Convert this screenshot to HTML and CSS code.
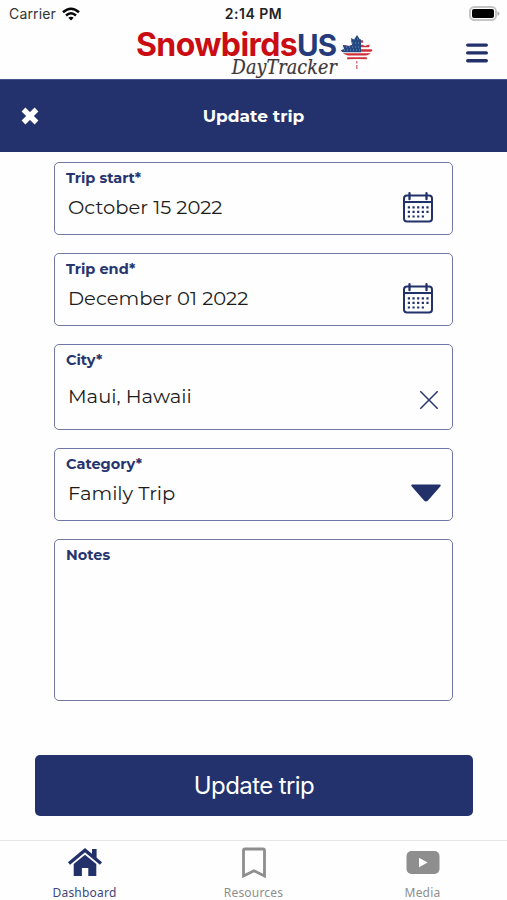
FILE: index.html
```html
<!DOCTYPE html>
<html lang="en">
<head>
<meta charset="utf-8">
<title>Update trip</title>
<link rel="stylesheet" href="styles.css">
</head>
<body>
<div class="app">
  <header class="top">
    <div class="status">
      <div class="carrier"><span>Carrier</span>
        <svg width="18" height="14" viewBox="0 0 18 14" fill="none" stroke="#050505" stroke-width="2.5"><path d="M1 5.3Q9-1.9 17 5.3M4 8.5Q9 4.1 14 8.5"/><path d="M9 13.5 6.3 10.8Q9 8.6 11.7 10.8Z" fill="#050505" stroke="none"/></svg>
      </div>
      <time class="clock">2:14 PM</time>
      <svg class="battery" width="31" height="15" viewBox="0 0 31 15"><rect x="1" y="1" width="26" height="13" rx="4.3" fill="#fff" stroke="#c4c4c4" stroke-width="2"/><rect x="3" y="3" width="22" height="9" rx="2" fill="#000"/><path d="M28.5 5.2v4.6q2-.7 2-2.3t-2-2.3" fill="#aaa"/></svg>
    </div>
    <div class="brandbar">
      <div class="brand">
        <div class="wordmark">
          <div class="name">Snowbirds<span>US</span></div>
          <div class="sub">DayTracker</div>
        </div>
        <svg class="leaf" width="32" height="36" viewBox="0 0 32 36">
          <defs><clipPath id="leaf"><path d="M16 0 19 4.5 22 3 22 10 24 11 29 9 28 12.5 31.5 15 29 19 25.5 20.5 26 24.5 17 24 15 24 6 24.5 6.5 20.5 3 19 0 15.5 3 14 2 10 8 11 11 10 10 3 13 4.5Z"/></clipPath></defs>
          <g clip-path="url(#leaf)"><path fill="#fff" d="M0 0h32v28H0z"/><path d="M0 6.5h32M0 11h32M0 15.5h32M0 19.4h32M0 23.4h32" stroke="#cf2f38" stroke-width="2.3"/><path d="M0 0h20v17.3H0z" fill="#254983"/><path d="M5 12h15M3 15h17M11 8h9M13 4h7" stroke="#9bb0cf" stroke-width=".7" stroke-dasharray="1 2"/></g>
          <path d="M15.8 26v2.5M15.8 30v4" stroke="#d77a80" stroke-width="1.5"/>
        </svg>
      </div>
      <svg class="menu" width="22" height="20" viewBox="0 0 22 20" stroke="#23316b" stroke-width="3.4" stroke-linecap="round"><path d="M1.7 2.1h18.6M1.7 9.9h18.6M1.7 17.7h18.6"/></svg>
    </div>
  </header>
  <div class="titlebar">
    <svg class="close" width="18" height="18" viewBox="0 0 18 18" stroke="#fff" stroke-width="5.4"><path d="m2.5 2.5 13 13M15.5 2.5l-13 13"/></svg>
    <h1>Update trip</h1>
  </div>
  <main class="form">
    <section class="field">
      <label>Trip start*</label><div class="value">October 15 2022</div>
      <svg class="cal" width="30" height="31" viewBox="0 0 30 31" fill="none" stroke="#23316b" stroke-width="2"><rect x="1" y="3.5" width="28" height="26" rx="3"/><path d="M1 10h28"/><path d="M6.5 1.2v6M23.5 1.2v6" stroke-width="2.3" stroke-linecap="round"/><path d="M4.8 15.3h21M4.8 19.8h21M4.8 24.5h16.5" stroke-width="2.2" stroke-dasharray="2.2 2.45"/></svg>
    </section>
    <section class="field">
      <label>Trip end*</label><div class="value">December 01 2022</div>
      <svg class="cal" width="30" height="31" viewBox="0 0 30 31" fill="none" stroke="#23316b" stroke-width="2"><rect x="1" y="3.5" width="28" height="26" rx="3"/><path d="M1 10h28"/><path d="M6.5 1.2v6M23.5 1.2v6" stroke-width="2.3" stroke-linecap="round"/><path d="M4.8 15.3h21M4.8 19.8h21M4.8 24.5h16.5" stroke-width="2.2" stroke-dasharray="2.2 2.45"/></svg>
    </section>
    <section class="field city">
      <label>City*</label><div class="value">Maui, Hawaii</div>
      <svg class="clear" width="20" height="20" viewBox="0 0 20 20" stroke="#29376f" stroke-width="1.5"><path d="m1.3 1.3 17.4 17.4M18.7 1.3 1.3 18.7"/></svg>
    </section>
    <section class="field category">
      <label>Category*</label><div class="value">Family Trip</div>
      <svg class="caret" width="30" height="18" viewBox="0 0 30 18"><path d="M1.3 1.5h27.4L16 16q-1 1-2 0Z" fill="#23316b" stroke="#23316b" stroke-width="2" stroke-linejoin="round"/></svg>
    </section>
    <section class="field notes"><label>Notes</label></section>
  </main>
  <button class="submit" type="button">Update trip</button>
  <nav class="tabs">
    <a class="tab active"><svg width="36" height="30" viewBox="0 0 36 30"><path d="M2 15.5 18 2.2l16 13.3" fill="none" stroke="#23316b" stroke-width="3.3"/><path d="M25 1h4.6v12L25 9ZM6.7 16 18 6.8 29.3 16v12h-8v-8h-6.4v8H6.7Z" fill="#23316b"/></svg><span>Dashboard</span></a>
    <a class="tab"><svg width="26" height="32" viewBox="0 0 26 32"><path d="M2.5 29V3.5Q2.5 2 4 2h18q1.5 0 1.5 1.5V29L13 23.8Z" fill="none" stroke="#8e8e8e" stroke-width="2.8"/></svg><span>Resources</span></a>
    <a class="tab"><svg width="34" height="26" viewBox="0 0 34 26"><rect x=".5" y="1" width="33" height="23" rx="5" fill="#8e8e8e"/><path d="M13 7.8v9.4l8.6-4.7Z" fill="#fff"/></svg><span>Media</span></a>
  </nav>
</div>
</body>
</html>
```

FILE: styles.css
```css
* { box-sizing: border-box; }
body { margin: 0; background: #fefefe; font-family: Montserrat, Inter, sans-serif; color: #1c1c1c; }
svg { display: block; flex: none; }
.app { width: 507px; height: 900px; display: flex; flex-direction: column; overflow: hidden; }
.top { height: 79px; flex: none; }
.status { height: 27px; display: grid; grid-template-columns: 1fr auto 1fr; align-items: center; padding: 0 7px 0 9px; }
.carrier { display: flex; gap: 6px; align-items: center; font: 14px/20px Inter, sans-serif; letter-spacing: .15px; color: #333; }
.clock { font: 600 14px/20px Inter, sans-serif; letter-spacing: .5px; margin: 0 1px 0 -1px; color: #222; }
.battery { justify-self: end; }
.brandbar { height: 52px; display: flex; justify-content: space-between; padding: 0 19px 0 136px; }
.brand { display: flex; gap: 5px; }
.wordmark { width: 201px; display: flex; flex-direction: column; }
.name { height: 31px; font: 700 32px/35px Inter, sans-serif; letter-spacing: -.6px; color: #c90d12; white-space: nowrap; }
.name span { font-size: 29.5px; letter-spacing: -.8px; color: #253b7a; }
.sub { align-self: flex-end; font: italic 19.5px/20px "DejaVu Serif Condensed", "DejaVu Serif", serif; letter-spacing: .1px; color: #3e3739; -webkit-text-stroke: .2px #3e3739; }
.leaf { margin: 8px 0 0 -1px; }
.menu { margin-top: 16px; }
.titlebar { height: 73px; flex: none; display: grid; grid-template-columns: 40px 1fr 40px; align-items: center; background: #23326c; border-top: 1px solid #47538a; padding: 0 21px 0 21px; }
h1 { margin: 0; text-align: center; font-size: 17px; line-height: 24px; font-weight: 700; color: #fff; letter-spacing: 0; }
.form { display: flex; flex-direction: column; gap: 18px; padding: 10px 54px 0 54px; }
.field { height: 73px; display: grid; grid-template-columns: 1fr auto; grid-template-rows: 30px 1fr; border: 1px solid #7278a3; border-radius: 5px; padding: 0 19px 0 11px; }
.field label { grid-column: 1 / -1; font-size: 14.5px; font-weight: 700; line-height: 18px; padding-top: 6px; color: #27356f; }
.value { font-size: 19.5px; line-height: 25px; padding: 2px 0 0 2px; white-space: nowrap; }
.cal { margin-top: -1px; }
.city { height: 86px; padding-right: 13px; }
.city .value { padding-top: 9px; }
.clear { margin-top: 15px; justify-self: end; }
.category { padding-right: 11px; }
.caret { margin-top: 5px; }
.notes { height: 162px; }
.submit { width: 438px; height: 61px; flex: none; margin: 54px 0 0 35px; border: 0; padding: 0; border-radius: 5px; background: #23326c; color: #fff; font: 400 24px/30px Inter, sans-serif; letter-spacing: -.6px; }
.tabs { height: 60px; margin-top: auto; flex: none; display: grid; grid-template-columns: repeat(3, 1fr); border-top: 1px solid #e6e6e8; }
.tab { display: grid; grid-template-rows: 43px 1fr; justify-items: center; align-items: center; font: 12px/17px "Noto Sans", sans-serif; color: #8e8e8e; }
.tab span { align-self: start; letter-spacing: .2px; }
.active { color: #3c467d; }
```
